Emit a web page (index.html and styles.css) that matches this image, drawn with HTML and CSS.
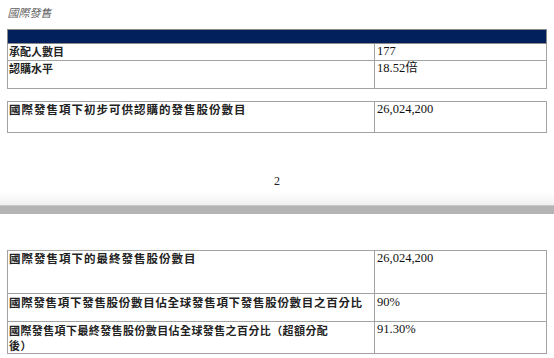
FILE: index.html
```html
<!DOCTYPE html>
<html>
<head>
<meta charset="utf-8">
<link rel="stylesheet" href="styles.css">
</head>
<body>
<div class="page top">
  <div class="title">國際發售</div>
  <div class="wrap">
  <table class="tbl t1">
    <colgroup><col class="ck"><col class="cv"></colgroup>
    <tr class="head"><td colspan="2"></td></tr>
    <tr class="r17"><td class="k">承配人數目</td><td class="v">177</td></tr>
    <tr class="r28"><td class="k">認購水平</td><td class="v">18.52倍</td></tr>
  </table>
  </div>
  <div class="wrap">
  <table class="tbl t2">
    <colgroup><col class="ck"><col class="cv"></colgroup>
    <tr class="r31"><td class="k">國際發售項下初步可供認購的發售股份數目</td><td class="v">26,024,200</td></tr>
  </table>
  </div>
  <div class="pnum">2</div>
</div>
<div class="sep"></div>
<div class="page bottom">
  <div class="wrap">
  <table class="tbl t3">
    <colgroup><col class="ck"><col class="cv"></colgroup>
    <tr class="r43"><td class="k">國際發售項下的最終發售股份數目</td><td class="v">26,024,200</td></tr>
    <tr class="r27"><td class="k">國際發售項下發售股份數目佔全球發售項下發售股份數目之百分比</td><td class="v">90%</td></tr>
    <tr class="r32"><td class="k">國際發售項下最終發售股份數目佔全球發售之百分比（超額分配<br>後）</td><td class="v">91.30%</td></tr>
  </table>
  </div>
</div>
</body>
</html>
```
FILE: styles.css
```css
html, body {
  margin: 0;
  padding: 0;
  background: #ffffff;
}
body {
  width: 554px;
  height: 358px;
  overflow: hidden;
  font-family: "Liberation Serif", "Noto Sans CJK TC", serif;
  color: #111;
}
.page {
  padding-left: 7px;
  padding-right: 7px;
  background: #fff;
}
.top {
  padding-top: 6px;
  height: 199px;
  background: linear-gradient(to bottom, #fff 0, #fff 192px, #f0f0f0 205px);
}
.title {
  font-family: "Noto Sans CJK TC", sans-serif;
  font-size: 11px;
  line-height: 13px;
  color: #5e5e5e;
  transform: skewX(-14deg);
  transform-origin: left bottom;
  width: 50px;
}
.wrap {
  width: 540px;
}
.tbl {
  border-collapse: collapse;
  width: 540px;
  table-layout: fixed;
}
.ck { width: 367px; }
.tbl td {
  border: 1px solid #a3a3a3;
  padding: 1px 2px 0 1px;
  vertical-align: top;
  font-size: 12px;
  line-height: 13px;
  overflow: hidden;
}
.tbl td.k {
  font-family: "Noto Sans CJK TC", sans-serif;
  font-weight: 700;
  font-size: 11.5px;
  color: #222;
  white-space: nowrap;
}
.tbl td.v {
  font-family: "Liberation Serif", "Noto Sans CJK TC", serif;
  font-size: 12.5px;
  padding-left: 2px;
}
.t1 { margin-top: 10px; }
.t1 .head td {
  background: #02215c;
  height: 13px;
  padding: 0;
  border-color: #8a8a8a;
}
.t1 td.k { font-size: 11px; }
.r17 td { height: 15px; }
.r28 td { height: 26px; }
.t2 { margin-top: 12px; }
.r31 td { height: 29px; }
.t2 td.k { letter-spacing: 1px; }
.pnum {
  text-align: center;
  font-size: 12px;
  line-height: 12px;
  margin-top: 42px;
  color: #222;
}
.sep {
  height: 8px;
  background: #b4b4b4;
  border-top: 1px solid #c8c8c8;
}
.bottom {
  padding-top: 36px;
}
.r43 td { height: 41px; }
.r27 td { height: 25px; padding-top: 2px; }
.r32 td { height: 30px; padding-top: 1px; }
.t3 td.k { letter-spacing: 1px; }
.t3 .r27 td.k { letter-spacing: 0.7px; }
.t3 .r32 td.k { letter-spacing: 0.4px; font-size: 11px; line-height: 15px; }
```
